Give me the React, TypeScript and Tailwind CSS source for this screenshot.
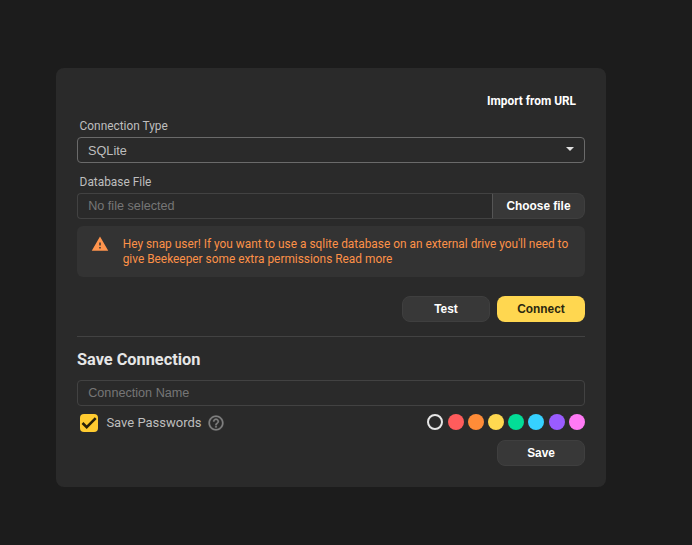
import React from "react";

const swatches = [
  "border-2 border-[#e6e6e6]",
  "bg-[#ff5c5c]",
  "bg-[#ff8c38]",
  "bg-[#ffd850]",
  "bg-[#03dd97]",
  "bg-[#36d1ff]",
  "bg-[#9a5cff]",
  "bg-[#ff7af5]",
];

function Button({ children, primary = false }: { children: React.ReactNode; primary?: boolean }) {
  return (
    <button
      className={`h-[26px] w-[88px] rounded-[8px] text-center font-['Liberation_Sans',sans-serif] text-[11.88px] leading-[24px] font-bold ${
        primary ? "bg-[#ffd750] text-[#2b270f]" : "border border-[#3f3f3f] bg-[#383838] text-white"
      }`}
    >
      {children}
    </button>
  );
}

export default function App() {
  return (
    <div className="h-[545px] w-[692px] overflow-hidden bg-[#1c1c1c] pt-[68px] pl-[56px] font-[Roboto,sans-serif] text-[11.88px] text-[#bebebe]">
      <div className="flex h-[419px] w-[550px] flex-col rounded-[8px] bg-[#2a2a2a] px-[21px]">
        <div className="mt-[25px] flex h-4 justify-end pr-[9px] leading-4 font-bold text-white">
          Import from URL
        </div>

        <label className="mt-[9px] h-4 pl-[2.6px] leading-4">Connection Type</label>
        <div className="mt-[3px] flex h-[26px] items-center justify-between rounded-[4px] border border-[#6a6a6a] pr-[10px] pl-[10px] font-['Liberation_Sans',sans-serif] text-[12.7px]">
          <span className="h-[22px] leading-[24px]">SQLite</span>
          <svg width="8" height="4" viewBox="0 0 8 4" className="mb-[3px]">
            <path d="M0 0h8L4 4z" fill="#e0e0e0" />
          </svg>
        </div>

        <label className="mt-[11px] h-4 pl-[2.6px] leading-4">Database File</label>
        <div className="mt-[3px] flex h-[26px]">
          <div className="flex flex-1 items-center rounded-l-[4px] border border-r-0 border-[#424242] pl-[10.2px] font-['Liberation_Sans',sans-serif] text-[12.65px] text-[#767676]">
            No file selected
          </div>
          <button className="w-[93px] rounded-r-[8px] border border-[#3f3f3f] border-l-[#555] bg-[#383838] text-center font-['Liberation_Sans',sans-serif] text-[11.88px] leading-[24px] font-bold text-white">
            Choose file
          </button>
        </div>

        <div className="mt-[7px] flex h-[51px] rounded-[6px] bg-[#333333] pt-[9px] pl-[14px] text-[#fd9148]">
          <svg width="18" height="18" viewBox="0 0 24 24" fill="#ff944d" className="shrink-0">
            <path d="M1 21h22L12 2 1 21zm12-3h-2v-2h2v2zm0-4h-2v-4h2v4z" />
          </svg>
          <p className="mt-[2px] ml-[13.7px] leading-[15px] whitespace-nowrap">
            Hey snap user! If you want to use a sqlite database on an external drive you'll need to
            <br />
            give Beekeeper some extra permissions Read more
          </p>
        </div>

        <div className="mt-[19px] flex justify-end gap-[7px]">
          <Button>Test</Button>
          <Button primary>Connect</Button>
        </div>

        <div className="mt-[14px] h-px shrink-0 bg-[#424242]" />

        <h3 className="mt-[13px] h-5 text-[16.32px] leading-5 font-bold text-[#e6e6e6]">Save Connection</h3>
        <div className="mt-[10px] flex h-[26px] items-center rounded-[4px] border border-[#424242] pl-[10.2px] font-['Liberation_Sans',sans-serif] text-[12.65px] text-[#767676]">
          Connection Name
        </div>

        <div className="mt-[8px] flex h-[18px] items-center justify-between">
          <div className="flex items-center pl-[2.7px] text-[13px]">
            <span className="flex h-[18px] w-[18px] items-center justify-center rounded-[4px] bg-[#ffcb30]">
              <svg width="18" height="18" viewBox="0 0 18 18" fill="none">
                <path d="M2.500 9l4.200 4.200L15.700 4.200" stroke="#2a2108" strokeWidth="2.600" />
              </svg>
            </span>
            <span className="ml-[8.7px]">Save Passwords</span>
            <svg
              width="18"
              height="18"
              viewBox="0 0 24 24"
              fill="#7f7f7f"
              stroke="#7f7f7f"
              strokeWidth="0.4"
              className="ml-[5.4px]"
            >
              <path d="M11 18h2v-2h-2v2zm1-16C6.480 2 2 6.480 2 12s4.480 10 10 10 10-4.480 10-10S17.520 2 12 2zm0 18c-4.410 0-8-3.590-8-8s3.590-8 8-8 8 3.590 8 8-3.590 8-8 8zm0-14c-2.210 0-4 1.790-4 4h2c0-1.100.9-2 2-2s2 .9 2 2c0 2-3 1.750-3 5h2c0-2.250 3-2.500 3-5 0-2.210-1.790-4-4-4z" />
            </svg>
          </div>
          <div className="flex w-[158px] pb-[2px]">
            {swatches.map((c, i) => (
              <span
                key={c}
                className={`h-4 w-4 shrink-0 rounded-full ${i === 0 || i === 5 ? "mr-[5px]" : "mr-1"} ${c}`}
              />
            ))}
          </div>
        </div>

        <div className="mt-[8px] flex justify-end">
          <Button>Save</Button>
        </div>
      </div>
    </div>
  );
}
